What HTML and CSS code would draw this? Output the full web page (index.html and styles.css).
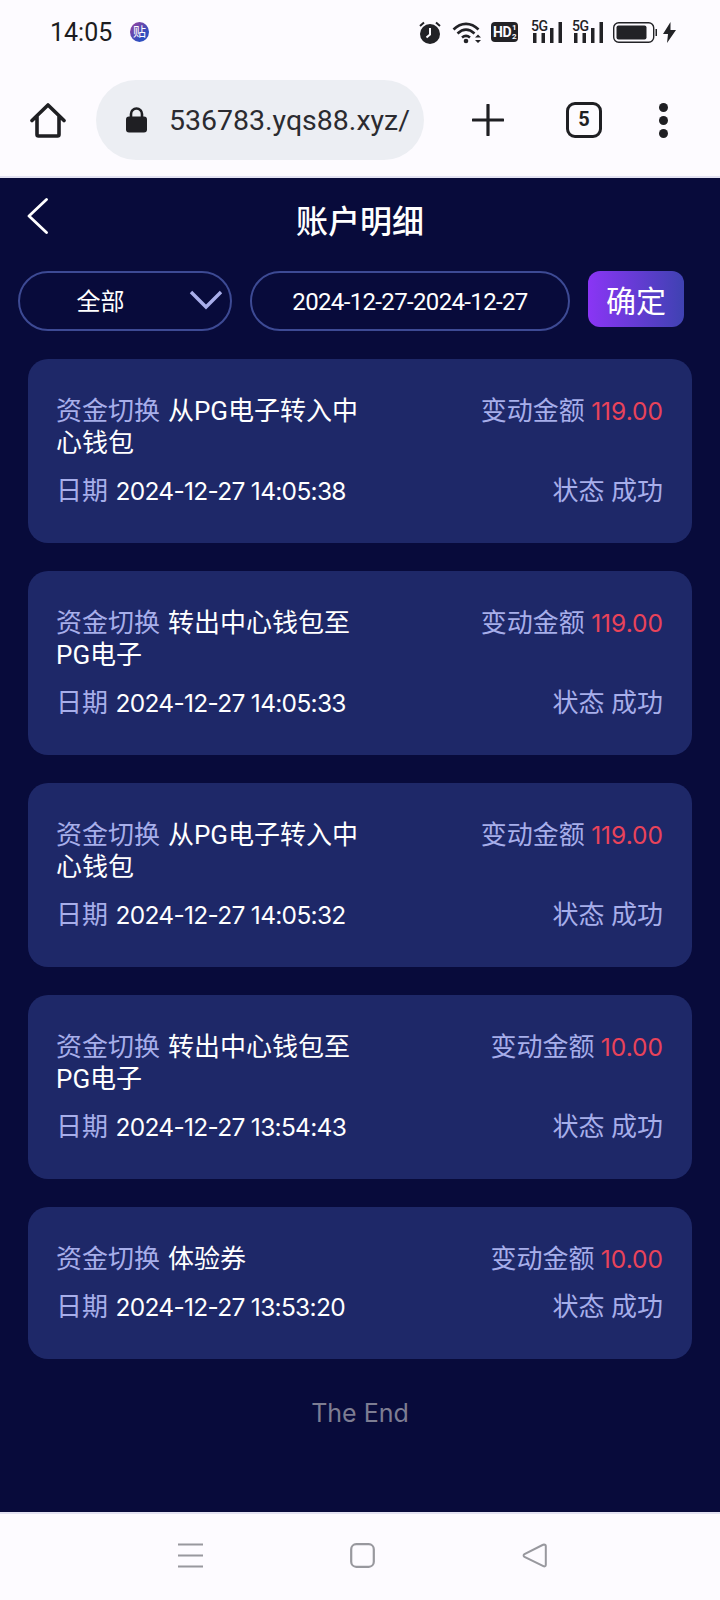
FILE: index.html
```html
<!DOCTYPE html>
<html>
<head>
<title>账户明细</title>
<link rel="stylesheet" href="styles.css">
</head>
<body>

<div class="status-bar">
  <span class="clock">14:05</span>
  <span class="app-badge">贴</span>
  <div class="status-icons">
    <svg class="ic-alarm" width="22" height="23" viewBox="0 0 22 23">
      <circle cx="11" cy="13" r="10" fill="#222226"/>
      <path d="M11 7v6.500l-3.500 3" fill="none" stroke="#fdfbff" stroke-width="2"/>
      <path d="M1 5l4-3.500M21 5l-4-3.500" stroke="#222226" stroke-width="2"/>
    </svg>
    <svg class="ic-wifi" width="30" height="23" viewBox="0 0 30 23">
      <g fill="none" stroke="#222226" stroke-width="2.600">
        <path d="M1.500 8.500C9 1 19 1 26.500 8.500"/>
        <path d="M5.500 12.500C11 7.500 17 7.500 22.500 12.500"/>
        <path d="M10 16.500C12.500 14.500 15.500 14.500 18 16.500"/>
      </g>
      <circle cx="14" cy="20" r="2.300" fill="#222226"/>
      <path d="M23 16.500l3-3 3 3zM23 19l3 3 3-3z" fill="#222226"/>
    </svg>
    <div class="hd-badge">HD<span class="hd-sub">1<br>2</span></div>
    <svg class="ic-signal" width="32" height="26" viewBox="0 -4 32 26">
      <text x="0" y="10" class="sig-text">5G</text>
      <path d="M2 12h3.500v10H2zM10.500 12h3.500v10h-3.500zM19 7h3.500v15H19zM27.500 1h3.500v21h-3.500z" fill="#222226"/>
    </svg>
    <svg class="ic-signal" width="32" height="26" viewBox="0 -4 32 26">
      <text x="0" y="10" class="sig-text">5G</text>
      <path d="M2 12h3.500v10H2zM10.500 12h3.500v10h-3.500zM19 7h3.500v15H19zM27.500 1h3.500v21h-3.500z" fill="#222226"/>
    </svg>
    <svg class="ic-battery" width="44" height="21" viewBox="0 0 44 21">
      <rect x="0.700" y="0.700" width="40" height="19.600" rx="5" fill="none" stroke="#222226" stroke-width="1.400"/>
      <rect x="3.500" y="3.500" width="30" height="14" rx="2" fill="#222226"/>
      <rect x="42.500" y="7" width="1.500" height="7" fill="#222226"/>
    </svg>
    <svg class="ic-bolt" width="13" height="21" viewBox="0 0 13 21">
      <path d="M7.500 0L0 12h5l-1 9 9-13H7.500z" fill="#222226"/>
    </svg>
  </div>
</div>

<div class="toolbar">
  <svg class="ic-home" width="36" height="36" viewBox="0 0 36 36">
    <path d="M2 18.500L18 3l16 15.500M7 14.500V32.500a1.500 1.500 0 0 0 1.500 1.500h19a1.500 1.500 0 0 0 1.500-1.500V14.500" fill="none" stroke="#1f1f23" stroke-width="3.600" stroke-linecap="round" stroke-linejoin="round"/>
  </svg>
  <div class="url-pill">
    <svg width="21" height="26" viewBox="0 0 21 26">
      <path d="M5 11V7a5.500 5.500 0 0 1 11 0v4" fill="none" stroke="#1f1f23" stroke-width="2.600"/>
      <rect x="0" y="9.500" width="21" height="16" rx="3" fill="#1f1f23"/>
    </svg>
    <span class="url-text">536783.yqs88.xyz/</span>
  </div>
  <svg class="ic-plus" width="32" height="32" viewBox="0 0 32 32">
    <path d="M16 1v30M1 16h30" stroke="#1f1f23" stroke-width="3.200" stroke-linecap="round"/>
  </svg>
  <div class="tab-count">5</div>
  <div class="menu-dots"><i></i><i></i><i></i></div>
</div>
<div class="toolbar-line"></div>

<div class="page">
  <div class="page-head">
    <svg class="ic-back" width="21" height="36" viewBox="0 0 21 36">
      <path d="M19.500 1.500L2 18l17.500 16.500" fill="none" stroke="#fff" stroke-width="2.800" stroke-linecap="round" stroke-linejoin="round"/>
    </svg>
    <h1>账户明细</h1>
  </div>

  <div class="filters">
    <div class="pill pill-type">
      <span>全部</span>
      <svg class="ic-caret" width="34" height="20" viewBox="0 0 34 20">
        <path d="M2 2l15 15L32 2" fill="none" stroke="#a9aeea" stroke-width="3.400"/>
      </svg>
    </div>
    <div class="pill pill-date">2024-12-27-2024-12-27</div>
    <button class="ok-btn">确定</button>
  </div>

  <div class="list">
    <div class="card">
      <div class="row">
        <div class="desc"><span class="lbl">资金切换</span> 从PG电子转入中心钱包</div>
        <div><span class="lbl">变动金额</span> <span class="en amount">119.00</span></div>
      </div>
      <div class="row row-second">
        <div><span class="lbl">日期</span> <span class="en when">2024-12-27 14:05:38</span></div>
        <div><span class="lbl">状态 成功</span></div>
      </div>
    </div>

    <div class="card">
      <div class="row">
        <div class="desc"><span class="lbl">资金切换</span> 转出中心钱包至PG电子</div>
        <div><span class="lbl">变动金额</span> <span class="en amount">119.00</span></div>
      </div>
      <div class="row row-second">
        <div><span class="lbl">日期</span> <span class="en when">2024-12-27 14:05:33</span></div>
        <div><span class="lbl">状态 成功</span></div>
      </div>
    </div>

    <div class="card">
      <div class="row">
        <div class="desc"><span class="lbl">资金切换</span> 从PG电子转入中心钱包</div>
        <div><span class="lbl">变动金额</span> <span class="en amount">119.00</span></div>
      </div>
      <div class="row row-second">
        <div><span class="lbl">日期</span> <span class="en when">2024-12-27 14:05:32</span></div>
        <div><span class="lbl">状态 成功</span></div>
      </div>
    </div>

    <div class="card">
      <div class="row">
        <div class="desc"><span class="lbl">资金切换</span> 转出中心钱包至PG电子</div>
        <div><span class="lbl">变动金额</span> <span class="en amount">10.00</span></div>
      </div>
      <div class="row row-second">
        <div><span class="lbl">日期</span> <span class="en when">2024-12-27 13:54:43</span></div>
        <div><span class="lbl">状态 成功</span></div>
      </div>
    </div>

    <div class="card">
      <div class="row">
        <div class="desc"><span class="lbl">资金切换</span> 体验券</div>
        <div><span class="lbl">变动金额</span> <span class="en amount">10.00</span></div>
      </div>
      <div class="row row-second">
        <div><span class="lbl">日期</span> <span class="en when">2024-12-27 13:53:20</span></div>
        <div><span class="lbl">状态 成功</span></div>
      </div>
    </div>
  </div>

  <div class="the-end">The End</div>
</div>

<div class="nav-line"></div>
<div class="nav-bar">
  <svg width="25" height="25" viewBox="0 0 25 25">
    <path d="M0 1.500h25M0 12.500h25M0 23.500h25" stroke="#98989e" stroke-width="2.200"/>
  </svg>
  <svg width="25" height="25" viewBox="0 0 25 25">
    <rect x="1.200" y="1.200" width="22.600" height="22.600" rx="5" fill="none" stroke="#98989e" stroke-width="2.200"/>
  </svg>
  <svg width="25" height="25" viewBox="0 0 25 25">
    <path d="M22 1.500c1 0 1.800.6 1.800 1.800v18.400c0 1.500-1.200 2.100-2.400 1.500L2.500 14c-1.200-.8-1.200-2.200 0-3L20.500 2z" fill="none" stroke="#98989e" stroke-width="2"/>
  </svg>
</div>

</body>
</html>
```

FILE: styles.css
```css
* {
  box-sizing: border-box;
}
html, body {
  margin: 0;
  padding: 0;
}
body {
  width: 720px;
  height: 1600px;
  overflow: hidden;
  background: #fdfbff;
  font-family: Roboto, "Noto Sans CJK SC", sans-serif;
}

/* phone status bar */
.status-bar {
  height: 64px;
  display: flex;
  align-items: center;
  padding-left: 50px;
  color: #1c1c20;
}
.clock {
  font-size: 25px;
  width: 80px;
}
.app-badge {
  width: 19px;
  height: 20px;
  border-radius: 50%;
  background: linear-gradient(135deg, #a0409a, #2f4fc0 70%);
  color: #fff;
  font-size: 13px;
  line-height: 20px;
  text-align: center;
}
.status-icons {
  margin-left: auto;
  margin-right: 44px;
  display: flex;
  align-items: center;
  gap: 9px;
}
.ic-alarm {
  margin-right: 2px;
}
.hd-badge {
  width: 27px;
  height: 20px;
  margin: 0 4px 0 0;
  border-radius: 4px;
  background: #222226;
  color: #fdfbff;
  font-size: 14px;
  font-weight: 700;
  line-height: 20px;
  padding-left: 2px;
  display: flex;
  letter-spacing: -0.5px;
}
.hd-sub {
  font-size: 8px;
  line-height: 9px;
  margin-left: 1px;
  padding-top: 1px;
}
.ic-signal {
  margin-top: -4px;
}
.sig-text {
  font-family: Roboto, sans-serif;
  font-size: 14px;
  font-weight: 500;
  fill: #222226;
  letter-spacing: -0.5px;
}
.ic-bolt {
  margin-left: -3px;
}

/* browser toolbar */
.toolbar {
  height: 112px;
  display: flex;
  align-items: center;
  padding-left: 30px;
}
.ic-home {
  flex: none;
}
.url-pill {
  width: 328px;
  height: 80px;
  margin-left: 30px;
  border-radius: 40px;
  background: #eceef3;
  display: flex;
  align-items: center;
  padding-left: 30px;
  gap: 22px;
  overflow: hidden;
}
.url-text {
  font-size: 28.500px;
  color: #2b2b30;
  white-space: nowrap;
}
.ic-plus {
  margin-left: 48px;
}
.tab-count {
  width: 36px;
  height: 36px;
  margin-left: 62px;
  border: 3.500px solid #1f1f23;
  border-radius: 9px;
  color: #1f1f23;
  font-size: 20px;
  font-weight: 700;
  line-height: 29px;
  text-align: center;
}
.menu-dots {
  margin-left: 57px;
  display: flex;
  flex-direction: column;
  gap: 4px;
}
.menu-dots i {
  display: block;
  width: 9px;
  height: 9px;
  border-radius: 50%;
  background: #1f1f23;
}
.toolbar-line {
  height: 2px;
  background: #e3e2f2;
}

/* account page */
.page {
  height: 1334px;
  background: #080b3b;
  color: #fff;
}
.page-head {
  position: relative;
  height: 93px;
  padding-top: 22px;
  text-align: center;
}
.ic-back {
  position: absolute;
  left: 27px;
  top: 20px;
}
h1 {
  margin: 0;
  font-size: 32px;
  font-weight: 500;
  line-height: 44px;
}
.filters {
  display: flex;
  align-items: flex-start;
  padding-left: 18px;
}
.pill {
  height: 60px;
  border: 2px solid #3d4a94;
  border-radius: 30px;
  font-size: 24px;
  line-height: 58px;
  text-align: center;
}
.pill-type {
  position: relative;
  width: 214px;
  padding-right: 49px;
}
.ic-caret {
  position: absolute;
  right: 7px;
  top: 17px;
}
.pill-date {
  width: 320px;
  margin-left: 18px;
  letter-spacing: -0.650px;
}
.ok-btn {
  width: 96px;
  height: 56px;
  margin-left: 18px;
  border: none;
  border-radius: 12px;
  background: linear-gradient(90deg, #8a35f5, #3f42b2);
  color: #fff;
  font-family: inherit;
  font-size: 30px;
  padding: 0;
}
.list {
  margin-top: 28px;
  padding: 0 28px;
  display: flex;
  flex-direction: column;
  gap: 28px;
}
.card {
  padding: 36px 29px 36px 28px;
  border-radius: 20px;
  background: #1e2868;
  font-size: 26px;
  line-height: 32px;
}
.row {
  display: flex;
  justify-content: space-between;
  align-items: flex-start;
}
.row-second {
  margin-top: 16px;
}
.desc {
  width: 304px;
}
.desc .lbl {
  margin-right: 1.500px;
}
.lbl {
  color: #a7aeea;
}
.en {
  font-family: Inter, sans-serif;
  font-size: 24.500px;
  line-height: 1;
}
.when {
  margin-left: 1px;
  letter-spacing: -0.700px;
}
.amount {
  color: #e9435a;
}
.the-end {
  margin-top: 37px;
  text-align: center;
  font-family: Inter, sans-serif;
  font-size: 25px;
  line-height: 34px;
  color: #7d7d92;
}

/* phone nav bar */
.nav-line {
  height: 2px;
  background: #e3e2f2;
}
.nav-bar {
  height: 84px;
  display: flex;
  align-items: center;
  padding: 0 0 2px 178px;
  gap: 147px;
}
```
